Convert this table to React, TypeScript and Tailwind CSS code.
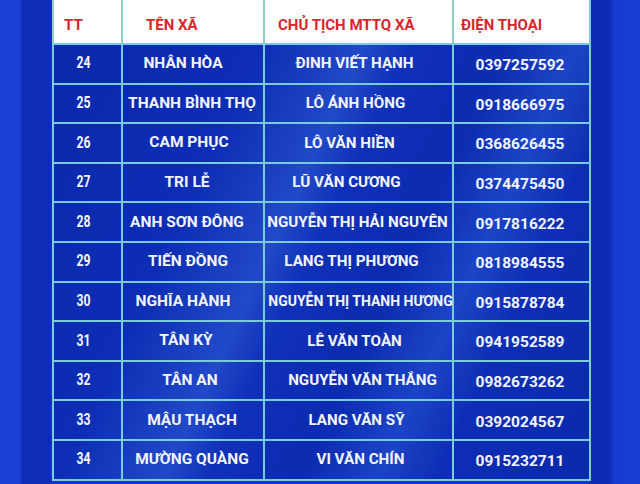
import React from 'react';

type Row = { tt: string; xa: string; ct: string; dt: string; xaOff?: number; ctOff?: number; ctSize?: string };

const rows: Row[] = [
  { tt: '24', xa: 'NHÂN HÒA', ct: 'ĐINH VIẾT HẠNH', dt: '0397257592', xaOff: -10, ctOff: -4 },
  { tt: '25', xa: 'THANH BÌNH THỌ', ct: 'LÔ ÁNH HỒNG', dt: '0918666975', xaOff: -1, ctOff: -3 },
  { tt: '26', xa: 'CAM PHỤC', ct: 'LÔ VĂN HIỀN', dt: '0368626455', xaOff: -4, ctOff: -9 },
  { tt: '27', xa: 'TRI LỄ', ct: 'LŨ VĂN CƯƠNG', dt: '0374475450', xaOff: -6, ctOff: -12 },
  { tt: '28', xa: 'ANH SƠN ĐÔNG', ct: 'NGUYỄN THỊ HẢI NGUYÊN', dt: '0917816222', xaOff: -6, ctOff: -1 },
  { tt: '29', xa: 'TIẾN ĐỒNG', ct: 'LANG THỊ PHƯƠNG', dt: '0818984555', xaOff: -5, ctOff: -7 },
  { tt: '30', xa: 'NGHĨA HÀNH', ct: 'NGUYỄN THỊ THANH HƯƠNG', dt: '0915878784', xaOff: -10, ctOff: 2, ctSize: 'text-[14px]' },
  { tt: '31', xa: 'TÂN KỲ', ct: 'LÊ VĂN TOÀN', dt: '0941952589', xaOff: -7, ctOff: -4 },
  { tt: '32', xa: 'TÂN AN', ct: 'NGUYỄN VĂN THẮNG', dt: '0982673262', xaOff: -3, ctOff: 4 },
  { tt: '33', xa: 'MẬU THẠCH', ct: 'LANG VĂN SỸ', dt: '0392024567', xaOff: -1, ctOff: -2 },
  { tt: '34', xa: 'MƯỜNG QUÀNG', ct: 'VI VĂN CHÍN', dt: '0915232711', xaOff: -1, ctOff: 2 },
];

const cols = 'grid grid-cols-[69px_142px_189px_137px]';

export default function App() {
  return (
    <div
      className="w-[640px] h-[484px] overflow-hidden flex bg-[linear-gradient(90deg,#1a40d6_0px,#1a40d6_20px,#0e2cb6_22px,#0e2cb6_50px,#1436c6_52px,#1436c6_588px,#0d2bb4_590px,#0d2bb4_610px,#1639cc_613px,#1a3fd4_640px)]"
      style={{ fontFamily: 'Roboto, "Noto Sans", "DejaVu Sans", sans-serif' }}
    >
      <div className="ml-[52px] w-[539px] h-[481px] relative border-r-2 border-b-2 border-[#7ccbd8] bg-[linear-gradient(115deg,#0a28ac_0%,#0c2db4_30%,#2149c8_44%,#0f30b8_50%,#0b2bb0_62%,#1c44c6_72%,#0d2eb4_80%,#0a29ad_100%)]">
        {/* header */}
        <div className={`${cols} h-[43px] bg-white`}>
          <div className="border-l-2 border-[#8fd0c4] flex items-center pl-[10px] text-[15px] font-bold text-[#d6262a] pt-[8px]">TT</div>
          <div className="border-l-2 border-[#8fd0c4] flex items-center pl-[23px] text-[15px] font-bold text-[#d6262a] pt-[8px]">TÊN XÃ</div>
          <div className="border-l-2 border-[#8fd0c4] flex items-center pl-[13px] text-[15px] font-bold text-[#d6262a] pt-[8px]">CHỦ TỊCH MTTQ XÃ</div>
          <div className="border-l-2 border-[#8fd0c4] flex items-center pl-[7px] text-[15px] font-bold text-[#d6262a] pt-[8px]">ĐIỆN THOẠI</div>
        </div>
        {rows.map((r) => (
          <div key={r.tt} className={`${cols} h-[39.6px] border-t-2 border-[#7ccbd8] text-[#f2f5ff] font-bold`}>
            <div className="border-l-2 border-[#7ccbd8] flex items-center justify-center pr-[8px]">
              <span className="inline-block text-[16.5px] scale-x-[0.74]">{r.tt}</span>
            </div>
            <div className="border-l-2 border-[#7ccbd8] flex items-center justify-center text-[15.5px] whitespace-nowrap">
              <span style={{ transform: `translateX(${r.xaOff ?? 0}px)` }}>{r.xa}</span>
            </div>
            <div className={`border-l-2 border-[#7ccbd8] flex items-center justify-center ${r.ctSize ?? 'text-[15.2px]'} whitespace-nowrap`}>
              <span style={{ transform: `translateX(${r.ctOff ?? 0}px)` }}>{r.ct}</span>
            </div>
            <div className="border-l-2 border-[#7ccbd8] flex items-center justify-center text-[15.5px] pt-[4px] pr-[3px]">
              {r.dt}
            </div>
          </div>
        ))}
      </div>
    </div>
  );
}
